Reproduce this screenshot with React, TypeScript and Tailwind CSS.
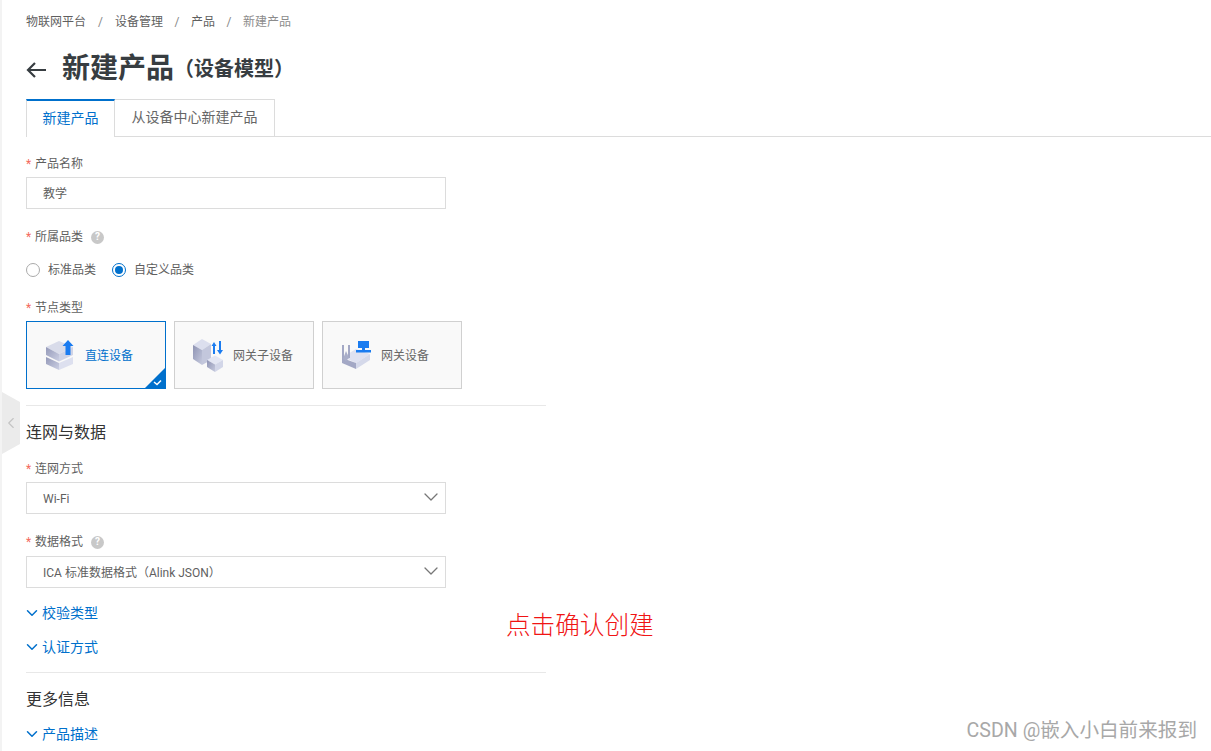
import { ChevronDown, ChevronLeft } from "lucide-react";

const font = "font-['Roboto','Noto_Sans_CJK_SC',sans-serif]";

function Label({ text, help }: { text: string; help?: boolean }) {
  return (
    <div className="flex h-[18px] items-center text-[12px] leading-[18px] text-[#5f5f5f]">
      <span className="mr-[4px] w-[5px] text-[#f4695c]">*</span>
      <span>{text}</span>
      {help && (
        <span className="ml-[8px] flex h-[13px] w-[13px] items-center justify-center rounded-full bg-[#c8c8c8] text-[10px] font-bold leading-none text-white">
          ?
        </span>
      )}
    </div>
  );
}

function Select({ value }: { value: string }) {
  return (
    <div className="flex h-[32px] w-[420px] items-center justify-between border border-[#dcdcdc] pl-[16px] pr-[2px] text-[12px] text-[#5f5f5f]">
      <span className="pt-[1px]">{value}</span>
      <ChevronDown size={24} strokeWidth={1.3} className="-mt-[2px] text-[#777]" />
    </div>
  );
}

function Toggle({ text, className }: { text: string; className: string }) {
  return (
    <div className={`flex h-[20px] items-center text-[14px] text-[#0070cc] ${className}`}>
      <ChevronDown size={18} strokeWidth={2} className="-ml-[3px] mr-[1px]" />
      <span>{text}</span>
    </div>
  );
}

function DirectIcon() {
  return (
    <svg width="30" height="31" viewBox="0 0 30 31">
      <defs>
        <linearGradient id="slabLeft" x1="0" y1="0" x2="1" y2="1">
          <stop offset="0" stopColor="#9499b8" />
          <stop offset="1" stopColor="#ccd0e4" />
        </linearGradient>
      </defs>
      <path d="M1 17 L14 23 V30 L1 24 Z" fill="url(#slabLeft)" />
      <path d="M14 23 L28 17 V24 L14 30 Z" fill="#dde0ef" />
      <path d="M1 7 L14 1 L28 7 L14 14 Z" fill="#d9dcea" />
      <path d="M1 7 L14 14 V21.500 L1 15 Z" fill="url(#slabLeft)" />
      <path d="M14 14 L28 7 V15 L14 21.500 Z" fill="#cfd3e6" />
      <path d="M20.500 15 V6 H17.500 L23 0 L28.500 6 H25.500 V15 Z" fill="#1b7cf0" />
    </svg>
  );
}

function SubDeviceIcon() {
  return (
    <svg width="32" height="33" viewBox="0 0 32 33" className="-ml-[1px]">
      <defs>
        <linearGradient id="cubeLeft" x1="0" y1="0" x2="1" y2="1">
          <stop offset="0" stopColor="#8e93b3" />
          <stop offset="1" stopColor="#c6cade" />
        </linearGradient>
      </defs>
      <path d="M1 6 L10 0 L19 5 L10 11 Z" fill="#dcdfee" />
      <path d="M1 6 L10 11 V26 L1 20 Z" fill="url(#cubeLeft)" />
      <path d="M10 11 L19 5 V21 L10 26 Z" fill="#c3c7dc" />
      <path d="M15 21 L23 16.500 L31 21 L23 25.500 Z" fill="#e3e6f3" />
      <path d="M15 21 L23 25.500 V33 L15 28 Z" fill="url(#cubeLeft)" />
      <path d="M23 25.500 L31 21 V28 L23 33 Z" fill="#d2d6e8" />
      <path d="M22 3 L24.500 7 H23 V15 H21 V7 H19.500 Z" fill="#1b7cf0" />
      <path d="M27 2 H29 V11 H31 L28 15.500 L25 11 H27 Z" fill="#1b7cf0" />
    </svg>
  );
}

function GatewayIcon() {
  return (
    <svg width="31" height="28" viewBox="0 0 31 28">
      <path d="M2 16 L15 8 L29 13 L15 22 Z" fill="#dfe2f1" />
      <path d="M1 17 L15 22 V28 L1 22 Z" fill="#a3a8c5" />
      <path d="M15 22 L29 13 V19 L15 28 Z" fill="#d5d9ea" />
      <path d="M1 4 H3 V18 H1 Z M7 4 H9 V17 H7 Z" fill="#a3a8c5" />
      <path d="M2 18 L5 10 L8 17 L5 20 Z" fill="#a9aec9" />
      <path d="M17 0 H28 V7 H24 V9 H30 V11.500 H15 V9 H21 V7 H17 Z" fill="#1b7cf0" />
    </svg>
  );
}

function NodeCard({ text, selected, children }: { text: string; selected?: boolean; children: React.ReactNode }) {
  return (
    <div
      className={`relative flex h-[68px] w-[140px] items-center overflow-hidden border bg-[#f9f9f9] text-[12px] ${
        selected ? "border-[#0070cc] text-[#0070cc]" : "border-[#d0d0d0] text-[#666]"
      }`}
    >
      <div className="ml-[18px] flex w-[40px] shrink-0">{children}</div>
      <span className="pt-[1px]">{text}</span>
      {selected && (
        <svg className="absolute bottom-0 right-0" width="20" height="20" viewBox="0 0 20 20">
          <path d="M20 0 V20 H0 Z" fill="#0070cc" />
          <path d="M9 14 L12 16.500 L16 12.500" stroke="#fff" strokeWidth="1.500" fill="none" />
        </svg>
      )}
    </div>
  );
}

export default function App() {
  return (
    <div className={`relative h-[751px] w-[1211px] overflow-hidden bg-white ${font}`}>
      <div className="absolute left-0 top-0 h-full w-[2px] bg-[#f3f3f3]" />

      {/* sidebar collapse handle */}
      <div className="absolute left-[2px] top-[392px] flex h-[62px] w-[18px] items-center justify-center bg-[#ebebeb] [clip-path:polygon(0_0,100%_16%,100%_84%,0_100%)]">
        <ChevronLeft size={22} strokeWidth={1.5} className="text-[#c4c4c4]" />
      </div>

      <div className="pl-[26px]">
        <div className="flex h-[18px] translate-y-[13px] items-center text-[12px] text-[#5f5f5f]">
          <span>物联网平台</span>
          <span className="w-[29px] text-center text-[#888]">/</span>
          <span>设备管理</span>
          <span className="w-[28px] text-center text-[#888]">/</span>
          <span>产品</span>
          <span className="w-[28px] text-center text-[#888]">/</span>
          <span className="text-[#8c8c8c]">新建产品</span>
        </div>

        <div className="mt-[31px] flex h-[40px] items-center text-[#373d41]">
          <svg width="20" height="16" viewBox="0 0 20 16" className="mr-[16px] mt-[2px]">
            <path d="M20 8 H2 M9 1 L2 8 L9 15" stroke="currentColor" strokeWidth="2.200" fill="none" />
          </svg>
          <span className="text-[28px] font-bold leading-[40px]">新建产品</span>
          <span className="text-[20px] font-bold leading-[40px]">（设备模型）</span>
        </div>

        <div className="mt-[10px] flex h-[38px] items-stretch border-b border-[#dcdcdc] text-[14px]">
          <div className="-mb-[1px] flex w-[89px] items-center justify-center border-l border-t-2 border-r border-l-[#dcdcdc] border-r-[#dcdcdc] border-t-[#0070cc] bg-white pb-[2px] text-[#0070cc]">
            新建产品
          </div>
          <div className="flex w-[160px] items-center justify-center border-r border-t border-[#dcdcdc] pb-[2px] text-[#666]">
            从设备中心新建产品
          </div>
        </div>

        <div className="mt-[18px]">
          <Label text="产品名称" />
        </div>
        <div className="mt-[4px] flex h-[32px] w-[420px] items-center border border-[#dcdcdc] pl-[16px] pt-[1px] text-[12px] text-[#5f5f5f]">
          教学
        </div>

        <div className="mt-[19px]">
          <Label text="所属品类" help />
        </div>
        <div className="mt-[14px] flex h-[20px] items-center text-[12px] text-[#5f5f5f]">
          <span className="h-[14px] w-[14px] rounded-full border border-[#aaa]" />
          <span className="ml-[8px]">标准品类</span>
          <span className="ml-[16px] flex h-[14px] w-[14px] items-center justify-center rounded-full border border-[#0070cc]">
            <span className="h-[8px] w-[8px] rounded-full bg-[#0070cc]" />
          </span>
          <span className="ml-[8px]">自定义品类</span>
        </div>

        <div className="mt-[19px]">
          <Label text="节点类型" />
        </div>
        <div className="mt-[4px] flex gap-[8px]">
          <NodeCard text="直连设备" selected>
            <DirectIcon />
          </NodeCard>
          <NodeCard text="网关子设备">
            <SubDeviceIcon />
          </NodeCard>
          <NodeCard text="网关设备">
            <GatewayIcon />
          </NodeCard>
        </div>

        <div className="mt-[16px] h-px w-[520px] bg-[#e8e8e8]" />
        <div className="mt-[15px] h-[24px] text-[16px] leading-[24px] text-[#333]">连网与数据</div>

        <div className="mt-[15px]">
          <Label text="连网方式" />
        </div>
        <div className="mt-[4px]">
          <Select value="Wi-Fi" />
        </div>

        <div className="mt-[19px]">
          <Label text="数据格式" help />
        </div>
        <div className="mt-[5px]">
          <Select value="ICA 标准数据格式（Alink JSON）" />
        </div>

        <Toggle text="校验类型" className="mt-[15px]" />
        <Toggle text="认证方式" className="mt-[14px]" />

        <div className="mt-[15px] h-px w-[520px] bg-[#e8e8e8]" />
        <div className="mt-[15px] h-[24px] text-[16px] leading-[24px] text-[#333]">更多信息</div>
        <Toggle text="产品描述" className="mt-[12px]" />
      </div>

      {/* screenshot annotation */}
      <div className="absolute left-[506px] top-[608px] text-[24.600px] font-light leading-[36px] text-[#f01414]">点击确认创建</div>
      {/* watermark */}
      <div className="absolute right-[14px] top-[718px] text-[19.600px] leading-[26px] text-[#a8a8a8]">CSDN @嵌入小白前来报到</div>
    </div>
  );
}
